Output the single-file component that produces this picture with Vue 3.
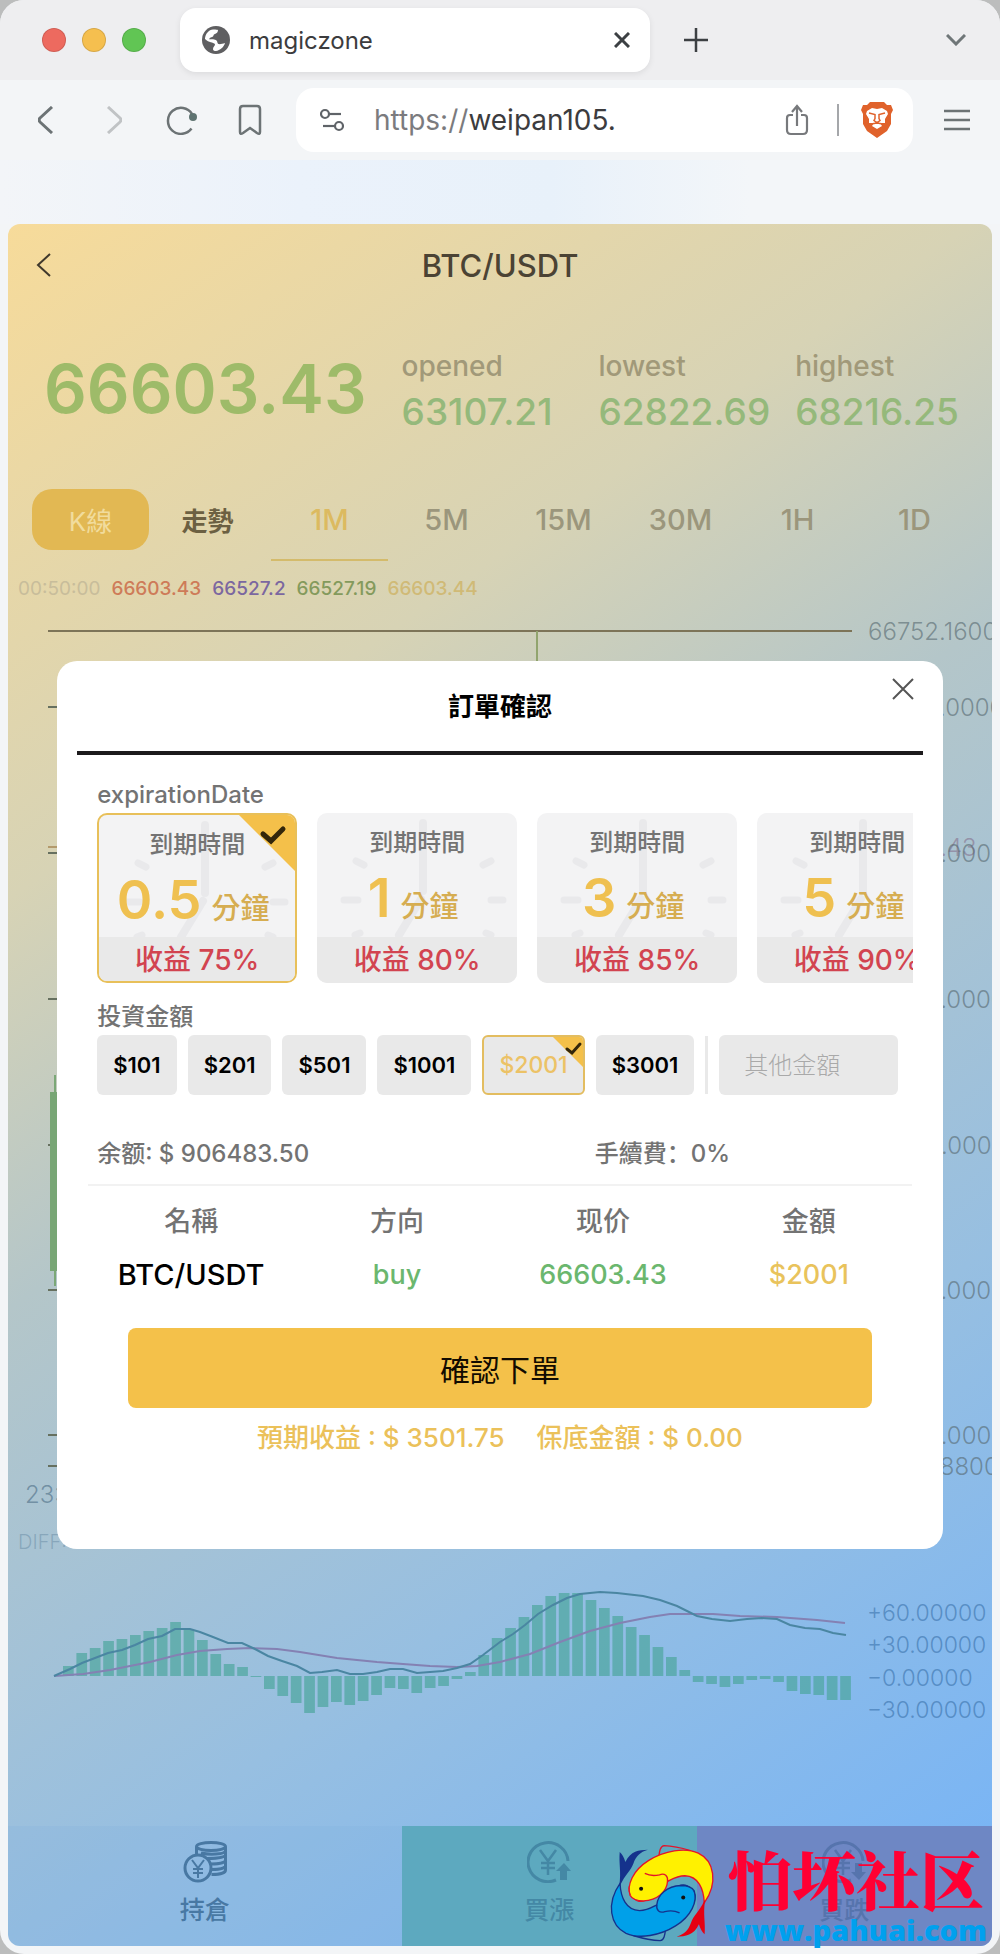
<script setup>
import { ref } from 'vue'

const stats = [
  { label: 'opened', value: '63107.21' },
  { label: 'lowest', value: '62822.69' },
  { label: 'highest', value: '68216.25' },
]
const periods = ['1M', '5M', '15M', '30M', '1H', '1D']
const period = ref('1M')

const durations = [
  { n: '0.5', rate: '75%' },
  { n: '1', rate: '80%' },
  { n: '3', rate: '85%' },
  { n: '5', rate: '90%' },
]
const duration = ref('0.5')

const amounts = [101, 201, 501, 1001, 2001, 3001]
const amount = ref(2001)
const custom = ref('')
const host = ref('weipan105.')

const ticks = [
  { y: 707, label: '66700.00000' },
  { y: 853, label: '66600.00000' },
  { y: 999, label: '66500.00000' },
  { y: 1145, label: '66400.00000' },
  { y: 1290, label: '66300.00000' },
  { y: 1435, label: '66200.00000' },
  { y: 1466, label: '66178.88000' },
]
const macdTicks = [
  { y: 1612, label: '+60.00000' },
  { y: 1644, label: '+30.00000' },
  { y: 1677, label: '−0.00000' },
  { y: 1709, label: '−30.00000' },
]

const ZERO = 1676
const histogram = [
  10, 23, 28, 35, 37, 41, 45, 48, 54, 46, 36, 22, 12, 9, -1, -13, -20, -27, -37, -31,
  -26, -29, -25, -19, -12, -13, -17, -12, -10, -3, 4, 21, 38, 48, 59, 71, 80, 83, 83, 76,
  68, 60, 49, 41, 29, 19, 6, -6, -8, -11, -8, -4, -3, -6, -15, -18, -19, -24, -24,
]
const bars = histogram.map((v, i) => ({
  x: 63 + i * 13.4,
  y: v > 0 ? ZERO - v : ZERO,
  h: Math.abs(v),
}))

const diff = '54,1676 70,1669 82,1663 95,1658 108,1653 122,1650 135,1645 148,1639 162,1636 175,1629 190,1629 200,1632 213,1637 228,1643 242,1643 255,1649 268,1656 282,1661 297,1666 310,1673 322,1672 337,1670 350,1674 363,1674 377,1672 390,1669 403,1669 417,1673 430,1672 443,1671 457,1668 470,1664 483,1655 500,1642 513,1634 525,1625 538,1614 553,1605 567,1598 580,1594 600,1592 617,1593 643,1596 660,1600 677,1606 697,1616 712,1619 730,1621 747,1619 762,1618 777,1619 790,1625 805,1628 820,1629 833,1633 846,1635'
const dea = '54,1676 83,1674 110,1670 150,1662 177,1655 200,1651 227,1649 250,1648 277,1649 300,1652 337,1658 377,1662 403,1664 430,1666 457,1667 477,1666 500,1662 530,1654 560,1642 590,1631 620,1623 650,1617 670,1614 693,1614 713,1614 740,1616 777,1617 817,1620 845,1623'

const fishBody = 'M384 470C374 438 392 395 440 365C486 336 548 325 588 343C636 366 648 432 606 492C604 450 588 412 548 411C524 411 508 422 496 428C494 458 466 484 424 486C404 486 390 480 384 470Z'
</script>

<template>
  <div class="window">
    <header class="tabs">
      <div class="lights"><i class="red"></i><i class="amber"></i><i class="green"></i></div>
      <div class="tab">
        <svg width="28" height="28" viewBox="0 0 28 28" aria-hidden="true">
          <circle cx="14" cy="14" r="14" fill="#5f5f61" />
          <path d="M3 13c0-5 4-9.500 8-9.500 1-.3 4 0 5 .5 0 2-1 3-3 4-2 0-1 3-3 3-2 .5-3 1-2.500 2.500 4-.5 8 0 8 3.500 1 2 4 1 7.500 0-1 4-5 7.500-9 8-2 0-3-.5-3-2 0-2.500 2-2.500 2-5-2-2-6-1-10-5z" fill="#fff" />
          <path d="M17 10c2-2 4-1 6.500-1.500 1.500 2 2 4 1.500 6-3 .5-7 0-8-4.500z" fill="#5f5f61" />
        </svg>
        <span class="tab-title">magiczone</span>
        <button class="bare" aria-label="Close tab">
          <svg width="16" height="16" viewBox="0 0 16 16"><path d="M1 1l14 14M15 1L1 15" stroke="#3c4043" stroke-width="3" /></svg>
        </button>
      </div>
      <button class="bare" aria-label="New tab">
        <svg width="24" height="24" viewBox="0 0 24 24"><path d="M12 0v24M0 12h24" stroke="#3c4043" stroke-width="2.500" /></svg>
      </button>
      <button class="bare push" aria-label="Tab list">
        <svg width="20" height="12" viewBox="0 0 20 12"><path d="M1 1l9 9 9-9" fill="none" stroke="#6f7678" stroke-width="3" /></svg>
      </button>
    </header>

    <nav class="toolbar" aria-label="Browser">
      <div class="nav-icons">
        <button class="bare" aria-label="Back">
          <svg width="16" height="28" viewBox="0 0 16 28"><path d="M14 1L2 12q-2 2 0 4l12 11" fill="none" stroke="#6c7375" stroke-width="3" /></svg>
        </button>
        <button class="bare" aria-label="Forward">
          <svg width="16" height="28" viewBox="0 0 16 28"><path d="M2 1l12 11q2 2 0 4L2 27" fill="none" stroke="#c0c3c5" stroke-width="3" /></svg>
        </button>
        <button class="bare" aria-label="Reload">
          <svg width="32" height="30" viewBox="0 0 32 30">
            <path d="M26 9A13 13 0 1 0 25.500 23.500" fill="none" stroke="#6c7375" stroke-width="2.500" />
            <circle cx="27" cy="12" r="4" fill="#5e7371" />
          </svg>
        </button>
        <button class="bare" aria-label="Bookmark">
          <svg width="24" height="32" viewBox="0 0 24 32"><path d="M2 5q0-3 3-3h14q3 0 3 3v23q0 3-3 1l-7-5-7 5q-3 2-3-1z" fill="none" stroke="#6c7375" stroke-width="2.500" /></svg>
        </button>
      </div>
      <div class="address">
        <svg width="24" height="24" viewBox="0 0 24 24" fill="none" stroke="#5f6368" stroke-width="2.200" aria-hidden="true">
          <circle cx="5" cy="6" r="4" /><path d="M9 6h12" /><circle cx="19" cy="18" r="4" /><path d="M3 18h12" />
        </svg>
        <label for="url" class="scheme">https://</label>
        <input id="url" v-model="host" class="host" type="text" />
        <button class="bare" aria-label="Share">
          <svg width="24" height="32" viewBox="0 0 24 32" fill="none" stroke="#77797c" stroke-width="2.200">
            <path d="M8 11H5q-3 0-3 3v12q0 4 4 4h12q4 0 4-4V14q0-3-3-3h-3M12 22V3M7 8l5-6 5 6" />
          </svg>
        </button>
        <span class="bar"></span>
        <button class="bare" aria-label="Shields">
          <svg width="32" height="36" viewBox="0 0 32 36">
            <path d="M9 0h14l3 3 4-0 2 5-2 4 0 10-4 7-10 7-10-7-4-7 0-10-2-4 2-5 4 0z" fill="#e0622b" />
            <path d="M6 9l5-3 5 1 5-1 5 3 1 3-3 5 0 4-5 0 2 3-5 3-5-3 2-3-5 0 0-4-3-5z" fill="#fff" />
            <path d="M8 11l6 1.500 0 4-1 2 3 2 3-2-1-2 0-4 6-1.500M10 22l6-1 6 1" fill="none" stroke="#e0622b" stroke-width="1.500" />
          </svg>
        </button>
      </div>
      <button class="bare menu" aria-label="Menu">
        <svg width="26" height="22" viewBox="0 0 26 22"><path d="M0 2h26M0 11h26M0 20h26" stroke="#6c7375" stroke-width="2.500" /></svg>
      </button>
    </nav>
    <div class="strip"></div>

    <main class="page">
      <div class="page-head">
        <a class="back" href="#" aria-label="Back">
          <svg width="16" height="24" viewBox="0 0 16 24"><path d="M14 1L2 12l12 11" fill="none" stroke="#3f382b" stroke-width="2" /></svg>
        </a>
        <h1>BTC/USDT</h1>
      </div>

      <section class="quote">
        <strong class="last">66603.43</strong>
        <div v-for="s in stats" :key="s.label" class="stat">
          <span>{{ s.label }}</span><b>{{ s.value }}</b>
        </div>
      </section>

      <div class="views">
        <button class="view on">K線</button>
        <button class="view">走勢</button>
        <div class="periods">
          <button v-for="p in periods" :key="p" class="period" :class="{ on: p === period }" @click="period = p">{{ p }}</button>
        </div>
      </div>

      <div class="averages">
        <span class="time">00:50:00</span><span class="a">66603.43</span><span class="b">66527.2</span><span class="c">66527.19</span><span class="d">66603.44</span>
      </div>

      <svg class="chart" viewBox="8 615 984 1211">
        <path d="M48 631H852" stroke="#7d7458" stroke-width="2" />
        <path d="M537 631V700" stroke="#91a46e" stroke-width="2" />
        <path d="M48 847H60" stroke="#b39a6c" stroke-width="2" />
        <text x="868" y="856" class="axis now">66603.43</text>
        <text x="868" y="640" class="axis">66752.16000</text>
        <g v-for="t in ticks" :key="t.y">
          <path :d="`M48 ${t.y}H60`" stroke="#66705f" stroke-width="2" />
          <text x="868" :y="t.y + 9" class="axis">{{ t.label }}</text>
        </g>
        <path d="M55 1075V1286" stroke="#7ba877" stroke-width="2" />
        <rect x="50" y="1092" width="11" height="179" fill="#78a675" />
        <text x="25" y="1503" class="axis dim">23:50</text>
        <text x="18" y="1549" class="legend">DIFF:</text>
        <rect v-for="b in bars" :key="b.x" :x="b.x" :y="b.y" width="10.700" :height="b.h" fill="#4aa59b" fill-opacity=".68" />
        <polyline :points="dea" fill="none" stroke="#8481b3" stroke-width="2" />
        <polyline :points="diff" fill="none" stroke="#4a86a2" stroke-width="2" />
        <text v-for="t in macdTicks" :key="t.y" x="867" :y="t.y + 9" class="axis blue">{{ t.label }}</text>
      </svg>

      <footer class="actions">
        <button class="action hold">
          <svg width="44" height="42" viewBox="0 0 44 42" fill="none" stroke="currentColor" stroke-width="3">
            <ellipse cx="28" cy="5.500" rx="14.500" ry="4" />
            <path d="M13.500 6v7M42.500 6v23c0 3-6 4.500-14 4.500M18 12c8 2 24 1.500 24-2M24 17.500c9 0 18-1 18-3.500M28 23c7 0 14-1 14-3.500M29 28.500c7 0 13-1 13-3.500" />
            <circle cx="15" cy="27" r="13" />
            <path d="M9 19l6 8 6-8M15 27v10M10 28h10M10 32h10" stroke-width="2" />
          </svg>
          <span>持倉</span>
        </button>
        <button class="action up">
          <svg width="44" height="42" viewBox="0 0 44 42" fill="none" stroke="currentColor" stroke-width="3">
            <path d="M41 20A20 19.500 0 1 0 29 39" />
            <path d="M13 9l8 11 8-11M21 20v14M14 22h14M14 27h14" stroke-width="2.500" />
            <path d="M37 22l7 8h-4v9h-7v-9h-4z" fill="currentColor" stroke="none" />
          </svg>
          <span>買漲</span>
        </button>
        <button class="action down">
          <svg width="44" height="42" viewBox="0 0 44 42" fill="none" stroke="currentColor" stroke-width="3">
            <path d="M41 20A20 19.500 0 1 0 29 39" />
            <path d="M13 9l8 11 8-11M21 20v14M14 22h14M14 27h14" stroke-width="2.500" />
            <path d="M37 39l7-8h-4v-9h-7v9h-4z" fill="currentColor" stroke="none" />
          </svg>
          <span>買跌</span>
        </button>
      </footer>

      <section class="modal" role="dialog" aria-labelledby="modal-title">
        <div class="modal-head">
          <h2 id="modal-title">訂單確認</h2>
          <button class="bare close" aria-label="Close">
            <svg width="22" height="22" viewBox="0 0 22 22"><path d="M1 1l20 20M21 1L1 21" stroke="#555" stroke-width="2" /></svg>
          </button>
        </div>

        <div class="modal-body">
          <p class="field">expirationDate</p>
          <div class="cards">
            <button v-for="d in durations" :key="d.n" class="card" :class="{ on: d.n === duration }" @click="duration = d.n">
              <svg class="clock" viewBox="0 0 200 124" width="200" height="124" fill="none" stroke="#e9e9eb" stroke-linecap="round" aria-hidden="true">
                <path d="M106 10V78M104 86L82 122" stroke-width="8" />
                <path d="M39 48l8 4M174 48l-8 4M27 87h14M174 87h12M38 122l5-2M174 122l-5-2" stroke-width="7" />
              </svg>
              <span class="card-title">到期時間</span>
              <span class="card-main"><b>{{ d.n }}</b><i>分鐘</i></span>
              <span class="card-rate">收益 {{ d.rate }}</span>
              <svg v-if="d.n === duration" class="corner" viewBox="0 0 58 58" width="58" height="58" aria-hidden="true">
                <path d="M0 0H58V58Z" fill="#f4c04a" /><path d="M25 20l8 7 12-12" fill="none" stroke="#33260a" stroke-width="5" stroke-linecap="round" />
              </svg>
            </button>
          </div>

          <p class="field second">投資金額</p>
          <div class="amounts">
            <button v-for="a in amounts" :key="a" class="amount" :class="{ on: a === amount }" @click="amount = a">
              ${{ a }}
              <svg v-if="a === amount" class="corner" viewBox="0 0 32 32" width="32" height="32" aria-hidden="true">
                <path d="M0 0H32V32Z" fill="#f4c04a" /><path d="M15 13l5 4 8-9" fill="none" stroke="#33260a" stroke-width="3" stroke-linecap="round" />
              </svg>
            </button>
            <span class="split"></span>
            <input v-model="custom" class="other" type="text" placeholder="其他金額" aria-label="其他金額" />
          </div>

          <div class="balance"><span>余额: $ 906483.50</span><span>手續費：0%</span></div>

          <table class="order">
            <thead><tr><th>名稱</th><th>方向</th><th>现价</th><th>金額</th></tr></thead>
            <tbody><tr><td class="pair">BTC/USDT</td><td class="gain">buy</td><td class="gain">66603.43</td><td class="gold">${{ amount }}</td></tr></tbody>
          </table>

          <button class="confirm">確認下單</button>
          <p class="expect"><span>預期收益 : $ 3501.75</span><span>保底金額 : $ 0.00</span></p>
        </div>
      </section>
    </main>

    <div class="mark">
      <svg class="fish" viewBox="315 310 335 305" width="112" height="102" aria-hidden="true">
        <g>
          <path d="M470 354C472 338 474 322 486 321C520 322 546 330 566 336" fill="none" stroke="#e3142a" stroke-width="4" />
          <path :d="fishBody" fill="#fff100" stroke="#e3142a" stroke-width="4" />
          <path d="M496 428C498 412 488 402 472 408Q448 414 428 404" fill="none" stroke="#e3142a" stroke-width="4" />
          <path d="M380 440C374 466 392 488 430 487C410 496 382 484 380 440Z" fill="#e3142a" />
          <path d="M606 486C590 520 574 530 566 552C558 574 546 586 523 593C550 592 574 590 590 556C594 570 600 580 607 586C610 550 602 530 608 486Z" fill="#e60012" />
          <circle cx="417" cy="450" r="6" fill="#111" />
        </g>
        <g transform="rotate(180 480 463)">
          <path d="M470 354C472 338 474 322 486 321C520 322 546 330 566 336" fill="none" stroke="#15328c" stroke-width="4" />
          <path :d="fishBody" fill="#00a0e9" stroke="#15328c" stroke-width="4" />
          <path d="M496 428C498 412 488 402 472 408Q448 414 428 404" fill="none" stroke="#15328c" stroke-width="4" />
          <path d="M380 440C374 466 392 488 430 487C410 496 382 484 380 440Z" fill="#15328c" />
          <path d="M606 486C590 520 574 530 566 552C558 574 546 586 523 593C550 592 574 590 590 556C594 570 600 580 607 586C610 550 602 530 608 486Z" fill="#15328c" />
          <circle cx="417" cy="450" r="6" fill="#111" />
        </g>
      </svg>
      <div class="mark-text"><strong>怕坏社区</strong><span>www.pahuai.com</span></div>
    </div>
  </div>
</template>

<style>
body { margin: 0; background: #bcbdbd; }
</style>

<style scoped>
* { box-sizing: border-box; }
.window {
  position: relative;
  background: #f3f5f7;
  border-radius: 24px;
  overflow: hidden;
  padding-bottom: 8px;
  font-family: Inter, "Noto Sans CJK TC", sans-serif;
  color: #3c3c3e;
}
button, input { font-family: inherit; }
button { cursor: pointer; }
.bare { border: 0; background: none; padding: 0; display: flex; align-items: center; justify-content: center; }
h1, h2, p { margin: 0; }

.tabs { display: flex; align-items: center; height: 80px; padding: 0 34px 0 42px; background: #eeeef0; }
.lights { display: flex; gap: 16px; width: 138px; }
.lights i { width: 24px; height: 24px; border-radius: 50%; border: 1px solid rgba(0, 0, 0, .12); }
.red { background: #ed6a5f; }
.amber { background: #f5bf4f; }
.green { background: #61c554; }
.tab { display: flex; align-items: center; width: 470px; height: 64px; padding: 0 20px 0 22px; margin-right: 34px; background: #fff; border-radius: 16px; box-shadow: 0 2px 6px rgba(0, 0, 0, .08); }
.tab-title { flex: 1; margin-left: 19px; font-size: 24px; }
.push { margin-left: auto; }

.toolbar { display: flex; align-items: center; height: 80px; padding: 0 30px; }
.nav-icons { flex: none; display: flex; align-items: center; gap: 36px; margin-right: 30px; }
.nav-icons .bare { width: 32px; }
.address { flex: 1; min-width: 0; display: flex; align-items: center; height: 64px; padding: 0 20px 0 24px; background: #fff; border-radius: 18px; }
.scheme { margin-left: 30px; font-size: 28px; color: #7b7b7e; }
.host { flex: 1; min-width: 0; border: 0; padding: 0; background: none; font-size: 28px; color: #3c3c3e; }
.bar { width: 2px; height: 32px; margin: 0 22px 0 28px; background: #a5a7aa; }
.menu { margin-left: 31px; }
.strip { height: 64px; background: linear-gradient(90deg, #f3f5f8, #ebf2fb 30%, #e8f1fa 55%, #f3f6f9 75%); }

.page { position: relative; margin: 0 8px; border-radius: 12px; overflow: hidden; background: linear-gradient(145deg, #f7db9a, #d7d3b5 28%, #b4c6c9 45%, #97bfe1 71%, #74b3f8); }
.page-head { position: relative; display: flex; align-items: center; justify-content: center; height: 82px; }
.back { position: absolute; left: 28px; display: flex; }
h1 { font-size: 31px; font-weight: 500; color: #4b4334; }

.quote { display: flex; align-items: center; height: 170px; }
.last { width: 40%; padding-left: 36px; font-size: 67px; line-height: 80px; padding-bottom: 4px; font-weight: 600; color: #9ebb69; }
.stat { display: flex; flex-direction: column; gap: 6px; width: 20%; font-size: 28px; line-height: 36px; font-weight: 500; color: #a19979; }
.stat b { font-size: 37px; line-height: 44px; font-weight: 500; color: #95b97b; }

.views { display: flex; height: 85px; padding: 13px 19px 0 24px; }
.view { width: 117px; height: 61px; border: 0; border-radius: 20px; padding: 0; background: none; font-size: 26px; font-weight: 600; color: #6c6042; }
.view.on { background: #e2b853; color: #f1dc9d; font-weight: 400; }
.periods { flex: 1; display: flex; margin-left: 5px; }
.period { flex: 1; height: 72px; padding: 0 0 10px; border: 0; border-bottom: 2px solid transparent; background: none; font-size: 29px; font-weight: 500; color: #9b967c; }
.period.on { color: #dcba60; border-color: #d4bb6b; }

.averages { display: flex; align-items: center; gap: 11px; height: 54px; padding-left: 10px; font-size: 19px; font-weight: 500; }
.time { color: #c8bd9b; font-weight: 400; }
.a { color: #ce7b58; }
.b { color: #7b67a0; }
.c { color: #849a5c; }
.d { color: #d0ba76; }

.chart { display: block; width: 100%; height: auto; }
.axis { font-size: 24px; font-weight: 300; fill: #56686f; fill-opacity: .62; }
.now { fill: #86718e; }
.dim { fill: #4d6e86; }
.blue { font-size: 23px; fill: #3a72ab; }
.legend { font-size: 20px; font-weight: 300; fill: #7f9fb5; fill-opacity: .8; }

.actions { display: flex; height: 120px; }
.action { display: flex; flex-direction: column; align-items: center; gap: 9px; width: 30%; padding: 15px 0 0; border: 0; font-size: 25px; line-height: 36px; font-weight: 500; }
.hold { width: 40%; background: rgba(120, 170, 220, .18); color: #4878a3; }
.up { background: #5da9bf; color: #4488a5; }
.down { background: #6e87c4; color: #5674ad; }

.modal { position: absolute; top: 437px; left: 5%; right: 5%; background: #fff; border-radius: 20px; padding: 0 20px 81px; }
.modal-head { position: relative; display: flex; align-items: center; justify-content: center; height: 94px; padding-bottom: 4px; border-bottom: 4px solid #1c1a1c; }
h2 { font-size: 26px; font-weight: 700; color: #000; }
.close { position: absolute; top: 17px; right: 9px; }
.modal-body { padding: 22px 10px 0 20px; }
.field { height: 36px; line-height: 36px; font-size: 24px; font-weight: 500; color: #737373; }
.second { margin-top: 16px; }

.cards { display: flex; gap: 20px; overflow: hidden; }
.card { position: relative; flex: none; display: flex; flex-direction: column; width: 200px; height: 170px; padding: 0; border: 0; border-radius: 10px; overflow: hidden; background: #f3f3f4; }
.clock { position: absolute; top: 0; left: 0; }
.card-title { position: relative; flex: none; height: 60px; line-height: 60px; font-size: 24px; font-weight: 500; color: #737373; }
.card-main { position: relative; flex: 1; min-height: 0; display: flex; align-items: baseline; justify-content: center; gap: 10px; padding-right: 8px; line-height: 50px; color: #efc050; }
.card-main b { font-size: 54px; font-weight: 600; }
.card-main i { font-size: 29px; font-weight: 500; font-style: normal; color: #d6ad51; }
.card-rate { position: relative; flex: none; height: 46px; line-height: 46px; background: #e9e9e9; font-size: 28px; font-weight: 500; color: #d24450; }
.card.on { border: 2px solid #e8c05a; }
.card.on .card-rate { height: 44px; }
.corner { position: absolute; top: -1px; right: -1px; }

.amounts { display: flex; gap: 11px; align-items: center; }
.amount { position: relative; flex: none; height: 60px; padding: 0 16px; border: 0; border-radius: 6px; overflow: hidden; background: #e9e9e9; font-size: 22px; font-weight: 600; color: #000; }
.amount.on { border: 2px solid #e3bd60; padding: 0 15px; font-size: 23px; font-weight: 500; color: #ecc266; }
.split { width: 3px; height: 58px; background: #e9e9e9; }
.other { flex: 1; min-width: 0; height: 60px; margin-right: 15px; padding: 0 25px; border: 0; border-radius: 6px; background: #e9e9e9; font-size: 24px; }
.other::placeholder { color: #a9a9a9; font-weight: 300; opacity: 1; }

.balance { display: flex; align-items: center; height: 46px; margin: 33px 0 10px; font-family: Inter, "Noto Sans CJK SC", sans-serif; font-size: 24px; font-weight: 500; color: #737373; }
.balance span { flex: 0 0 61%; }
.order { width: calc(100% + 8px); margin-left: -9px; border-collapse: collapse; table-layout: fixed; border-top: 2px solid #f2f2f2; text-align: center; }
.order th { height: 68px; padding: 0; font-size: 27px; font-weight: 500; color: #737373; }
.order td { height: 44px; padding: 0; font-size: 27px; line-height: 36px; font-weight: 500; color: #000; }
.order .pair { font-size: 29px; }
.order .gain { color: #6bb76e; }
.order .gold { color: #e9c35c; }
.confirm { display: block; width: calc(100% - 72px); height: 80px; margin: 31px auto 0 31px; border: 0; border-radius: 8px; background: #f4c14a; font-size: 30px; color: #120b00; }
.expect { display: flex; justify-content: center; gap: 32px; height: 60px; line-height: 60px; margin-right: 10px; font-size: 26px; font-weight: 500; color: #ebc15a; }

.mark { position: absolute; right: 13px; bottom: 6px; display: flex; align-items: flex-start; gap: 6px; }
.mark-text { display: flex; flex-direction: column; align-items: center; font-family: "Noto Serif CJK SC", "Noto Sans CJK SC", sans-serif; }
.mark-text strong { font-size: 64px; line-height: 70px; font-weight: 900; color: #ff0033; }
.mark-text span { font-family: "Open Sans", sans-serif; font-size: 29px; line-height: 36px; font-weight: 800; color: #00a0ee; }
</style>
